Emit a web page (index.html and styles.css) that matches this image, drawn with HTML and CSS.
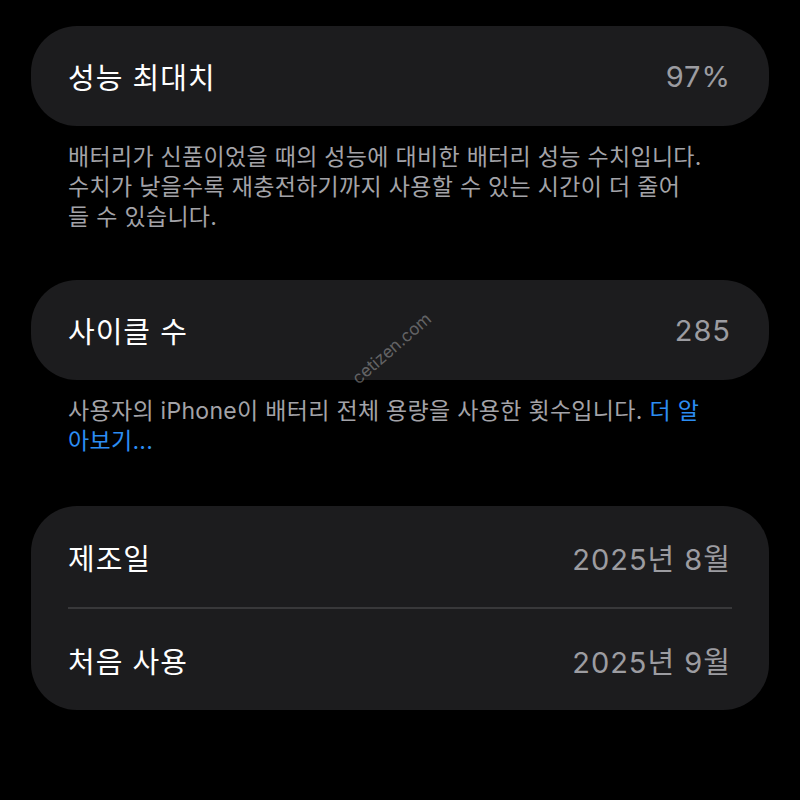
FILE: index.html
```html
<!DOCTYPE html>
<html lang="ko">
<head>
    <meta charset="UTF-8">
    <meta name="viewport" content="width=device-width, initial-scale=1.0">
    <title>배터리 성능</title>
    <link rel="stylesheet" href="styles.css">
</head>
<body>
    <div class="page">
        <!-- Maximum capacity -->
        <div class="card">
            <div class="row">
                <span class="label">성능 최대치</span>
                <span class="value">97%</span>
            </div>
        </div>
        <p class="footer">배터리가 신품이었을 때의 성능에 대비한 배터리 성능 수치입니다.<br>수치가 낮을수록 재충전하기까지 사용할 수 있는 시간이 더 줄어<br>들 수 있습니다.</p>

        <!-- Cycle count -->
        <div class="card watermarked">
            <div class="row">
                <span class="label">사이클 수</span>
                <span class="value">285</span>
            </div>
            <span class="watermark">cetizen.com</span>
        </div>
        <p class="footer">사용자의 iPhone이 배터리 전체 용량을 사용한 횟수입니다. <a href="#" class="link">더 알<br>아보기...</a></p>

        <!-- Dates -->
        <div class="card group">
            <div class="row">
                <span class="label">제조일</span>
                <span class="value">2025년 8월</span>
            </div>
            <div class="divider"></div>
            <div class="row">
                <span class="label">처음 사용</span>
                <span class="value">2025년 9월</span>
            </div>
        </div>
    </div>
</body>
</html>
```

FILE: styles.css
```css
/* General */
body {
    margin: 0;
    padding: 0;
    background: #000;
    font-family: 'Inter', 'Noto Sans CJK KR', sans-serif;
    color: #fff;
}

.page {
    padding: 26px 31px 0;
    display: flex;
    flex-direction: column;
}

/* Grouped card */
.card {
    background: #1c1c1e;
    border-radius: 46px;
    padding: 0 39px 0 37px;
}

.row {
    height: 100px;
    display: flex;
    justify-content: space-between;
    align-items: center;
    font-size: 29px;
    letter-spacing: 1px;
}

.group .row {
    height: 101px;
}

.label {
    color: #fff;
}

.value {
    color: #9c9ca1;
    margin-right: -1px;
}

.divider {
    height: 2px;
    background: #38383a;
    margin-right: -2px;
}

/* Footer text under a card */
.footer {
    margin: 16px 0 48px;
    padding-left: 37px;
    font-size: 23px;
    line-height: 30px;
    letter-spacing: 0.3px;
    color: #a3a3a8;
}

.footer:last-of-type {
    margin-bottom: 50px;
}

.link {
    color: #2c8df3;
    text-decoration: none;
}

/* Watermark over the cycle card */
.watermarked {
    position: relative;
}

.watermark {
    position: absolute;
    left: 330px;
    top: 88px;
    font-size: 17px;
    color: rgba(255, 255, 255, 0.32);
    transform: rotate(-41deg);
    transform-origin: left bottom;
    white-space: nowrap;
}
```
